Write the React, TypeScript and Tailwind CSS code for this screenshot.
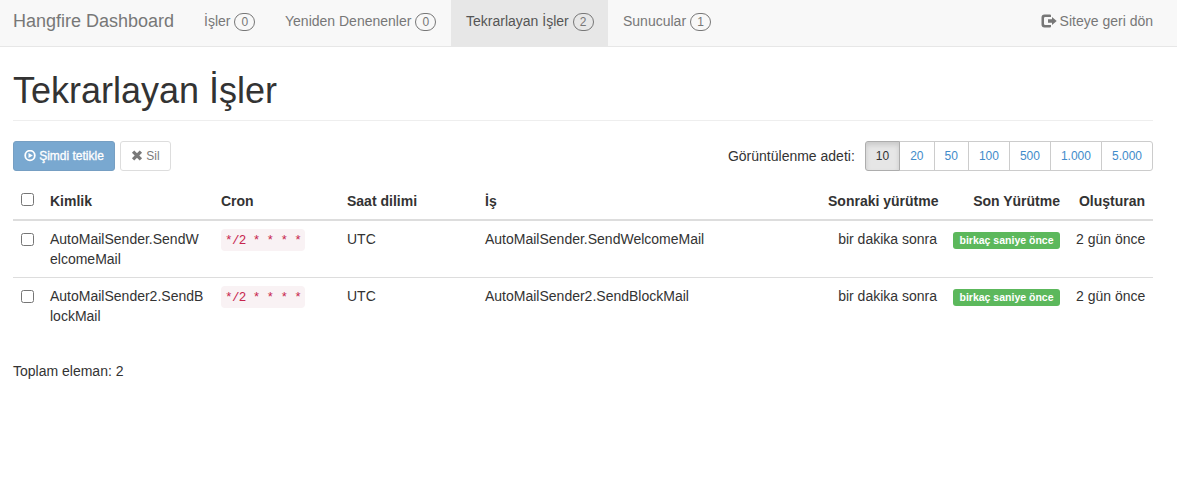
import React from "react";

const navItems = [
  { label: "İşler", count: 0, box: "w-[81px]", active: false },
  { label: "Yeniden Denenenler", count: 0, box: "w-[181px]", active: false },
  { label: "Tekrarlayan İşler", count: 2, box: "w-[157px]", active: true },
  { label: "Sunucular", count: 1, box: "w-[118px]", active: false },
];

const pageSizes = ["10", "20", "50", "100", "500", "1.000", "5.000"];

const jobs = [
  { id: "AutoMailSender.SendWelcomeMail", cron: "*/2 * * * *" },
  { id: "AutoMailSender2.SendBlockMail", cron: "*/2 * * * *" },
];

function LogOutIcon() {
  return (
    <svg viewBox="0 0 16 14" className="h-[14px] w-[16px] shrink-0" fill="currentColor">
      <path d="M9 0.500H3.500A3 3 0 0 0 0.500 3.500V10.500A3 3 0 0 0 3.500 13.500H9A1 1 0 0 0 10 12.500V11H4.200A1.200 1.200 0 0 1 3 9.800V4.200A1.200 1.200 0 0 1 4.200 3H10V1.500A1 1 0 0 0 9 0.500Z" />
      <path d="M11 2.900 15.700 7 11 11.100V8.700H7V5.300H11Z" />
    </svg>
  );
}

function PlayCircleIcon() {
  return (
    <svg viewBox="0 0 12 12" className="size-3 shrink-0" fill="none">
      <circle cx="6" cy="5.500" r="4.800" stroke="currentColor" strokeWidth="1.800" />
      <path d="M4.500 2.900 8.800 5.500 4.500 8.100Z" fill="currentColor" />
    </svg>
  );
}

function RemoveIcon() {
  return (
    <svg viewBox="0 0 12 12" className="size-3 shrink-0" fill="none">
      <path d="M2.100 1.600 9.900 9.400M9.900 1.600 2.100 9.400" stroke="currentColor" strokeWidth="3.300" />
    </svg>
  );
}

function Checkbox({ className }: { className: string }) {
  return <input type="checkbox" className={`block size-[13px] ${className}`} />;
}

export default function App() {
  return (
    <div className="h-[477px] w-full overflow-hidden bg-white font-['Liberation_Sans',Arial,sans-serif] text-sm leading-5 text-[#333]">
      <nav className="h-[47px] border-b border-[#e7e7e7] bg-[#f8f8f8] pr-6 pl-[13px] text-[#777]">
        <div className="flex h-[46px] items-stretch">
          <a className="flex w-44 items-center pb-1 text-lg leading-5 whitespace-nowrap">Hangfire Dashboard</a>
          {navItems.map((item) => (
            <a
              key={item.label}
              className={`flex shrink-0 items-center gap-1 px-[15px] pb-0.5 whitespace-nowrap ${item.box} ${
                item.active ? "bg-[#e7e7e7] text-[#555]" : ""
              }`}
            >
              <span className="pb-0.5">{item.label}</span>
              <span className="flex h-[18px] w-[21px] shrink-0 items-center justify-center rounded-[10px] border border-[#777] text-xs leading-3 text-[#777]">
                {item.count}
              </span>
            </a>
          ))}
          <a className="ml-auto flex items-center gap-[3px] pb-1 whitespace-nowrap">
            <LogOutIcon />
            Siteye geri dön
          </a>
        </div>
      </nav>

      <main className="w-[1153px] pl-[13px]">
        <header className="mt-6 border-b border-[#eee] pb-[9px]">
          <h1 className="h-10 text-[36px] leading-10">Tekrarlayan İşler</h1>
        </header>

        <div className="mt-5 flex h-[30px] items-center">
          <button className="flex h-[30px] w-[102px] items-center justify-center gap-[3px] rounded-[3px] border border-[#2e6da4] bg-[#337ab7] text-xs text-white opacity-65 [-webkit-text-stroke:0.3px_white]">
            <PlayCircleIcon />
            Şimdi tetikle
          </button>
          <button className="ml-[5px] flex h-[30px] w-[51px] items-center justify-center gap-[3px] rounded-[3px] border border-[#ccc] bg-white text-xs opacity-65">
            <RemoveIcon />
            Sil
          </button>
          <span className="mr-2.5 ml-auto">Görüntülenme adeti:</span>
          <div className="flex">
            {pageSizes.map((size, i) => (
              <a
                key={size}
                className={`h-[30px] border px-2.5 py-[5px] text-xs leading-[18px] first:rounded-l-[3px] last:rounded-r-[3px] ${
                  i === 0
                    ? "border-[#adadad] bg-[#e6e6e6] text-[#333] shadow-[inset_0_3px_5px_rgba(0,0,0,0.125)]"
                    : "-ml-px border-[#ccc] bg-white text-[#428bca] " + (i === 1 ? "border-l-[#adadad]" : "")
                }`}
              >
                {size}
              </a>
            ))}
          </div>
        </div>

        <table className="mt-3 w-[1140px] table-fixed border-separate border-spacing-0 text-left">
          <colgroup>
            <col className="w-[29px]" />
            <col className="w-[171px]" />
            <col className="w-[126px]" />
            <col className="w-[138px]" />
            <col className="w-[343px]" />
            <col className="w-[125px]" />
            <col className="w-[123px]" />
            <col className="w-[85px]" />
          </colgroup>
          <thead>
            <tr className="[&>th]:h-[38px] [&>th]:border-b-2 [&>th]:border-[#ddd] [&>th]:p-2 [&>th]:align-top [&>th]:whitespace-nowrap">
              <th><Checkbox className="mt-0.5" /></th>
              <th>Kimlik</th>
              <th>Cron</th>
              <th>Saat dilimi</th>
              <th>İş</th>
              <th className="text-right">Sonraki yürütme</th>
              <th className="text-right">Son Yürütme</th>
              <th className="text-right">Oluşturan</th>
            </tr>
          </thead>
          <tbody>
            {jobs.map((job) => (
              <tr
                key={job.id}
                className="[&>td]:p-2 [&>td]:align-top not-first:[&>td]:border-t not-first:[&>td]:border-[#ddd]"
              >
                <td><Checkbox className="mt-1" /></td>
                <td className="break-all">{job.id}</td>
                <td className="whitespace-nowrap">
                  <code className="flex h-[22px] w-[84px] items-center rounded bg-[#f9f2f4] px-1 pt-0.5 font-['Liberation_Mono',monospace] text-[12.6px] tracking-[-0.63px] text-[#c7254e]">
                    {job.cron}
                  </code>
                </td>
                <td>UTC</td>
                <td>{job.id}</td>
                <td className="text-right whitespace-nowrap">bir dakika sonra</td>
                <td className="whitespace-nowrap">
                  <span className="mt-[3px] ml-auto flex h-[17px] w-[107px] items-center justify-center rounded-[3px] bg-[#5cb85c] text-[10.5px] leading-none font-bold text-white">
                    birkaç saniye önce
                  </span>
                </td>
                <td className="text-right whitespace-nowrap">2 gün önce</td>
              </tr>
            ))}
          </tbody>
        </table>

        <p className="mt-[27px]">Toplam eleman: 2</p>
      </main>
    </div>
  );
}
